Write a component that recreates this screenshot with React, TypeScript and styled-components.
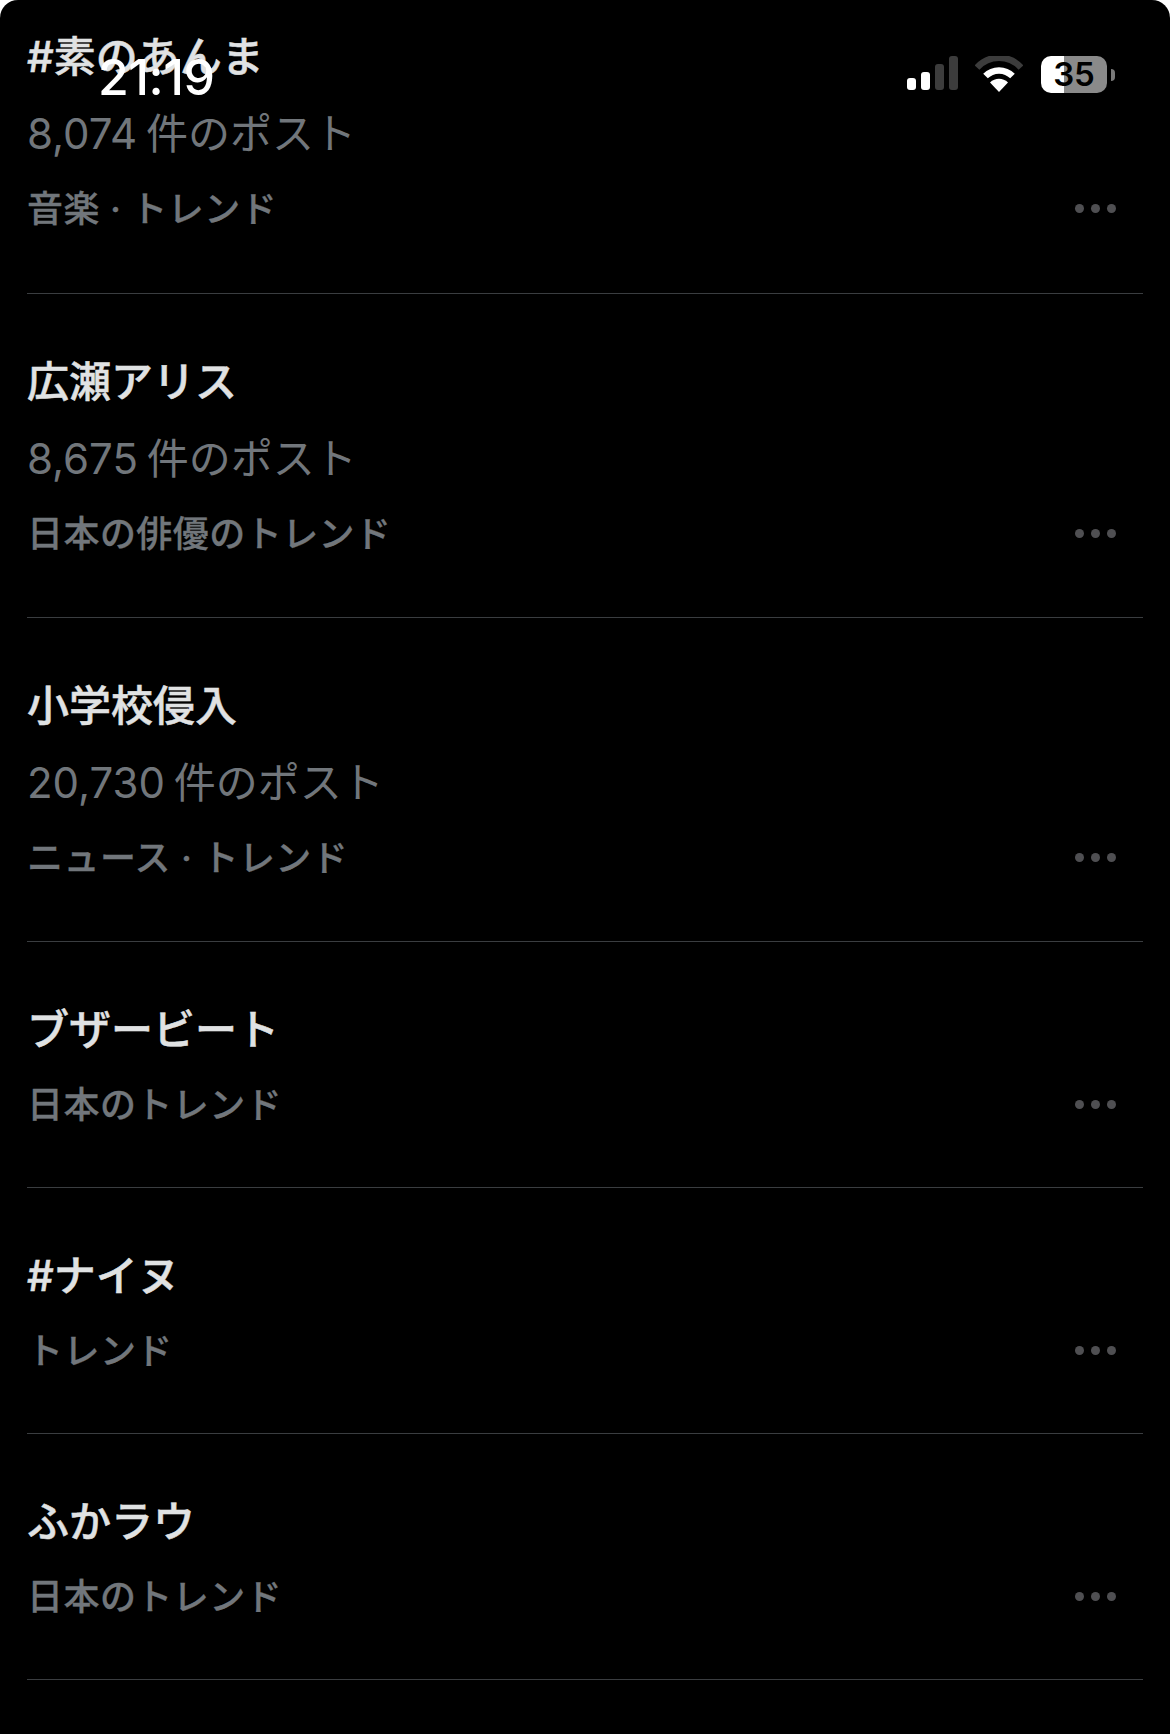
import { FC } from 'react';
import styled, { createGlobalStyle } from 'styled-components';

interface Trend {
  title: string;
  posts?: string;
  meta: string;
}

const TRENDS: Trend[] = [
  { title: '#素のあんま', posts: '8,074 件のポスト', meta: '音楽 · トレンド' },
  { title: '広瀬アリス', posts: '8,675 件のポスト', meta: '日本の俳優のトレンド' },
  { title: '小学校侵入', posts: '20,730 件のポスト', meta: 'ニュース · トレンド' },
  { title: 'ブザービート', meta: '日本のトレンド' },
  { title: '#ナイヌ', meta: 'トレンド' },
  { title: 'ふかラウ', meta: '日本のトレンド' },
];

const App: FC = () => (
  <>
    <GlobalStyle />
    <Screen>
      <StatusBar>
        <Time>21:19</Time>
        <StatusIcons>
          <svg width="51" height="34" viewBox="0 0 51 34">
            <rect x="0" y="22" width="9" height="12" rx="3" fill="#fff" />
            <rect x="14" y="16" width="9" height="18" rx="3" fill="#fff" />
            <rect x="28" y="8" width="9" height="26" rx="3" fill="#3c3c3c" />
            <rect x="42" y="0" width="9" height="34" rx="3" fill="#3c3c3c" />
          </svg>
          <svg width="48" height="36" viewBox="0 0 48 36">
            <path d="M2 11.5C14 -1.5 34 -1.5 46 11.5" fill="none" stroke="#3c3c3c" strokeWidth="6.5" />
            <path d="M10.5 20C18 12.5 30 12.5 37.5 20" fill="none" stroke="#fff" strokeWidth="6.5" />
            <path d="M24 36L15 26.5C20 21.5 28 21.5 33 26.5Z" fill="#fff" />
          </svg>
          <Battery>
            <BatteryBody>
              <BatteryLevel>35</BatteryLevel>
            </BatteryBody>
            <BatteryCap />
          </Battery>
        </StatusIcons>
      </StatusBar>
      <List>
        {TRENDS.map((trend) => (
          <Row key={trend.title}>
            <Title>{trend.title}</Title>
            {trend.posts && <Posts>{trend.posts}</Posts>}
            <MetaLine>
              <Meta>{trend.meta}</Meta>
              <More>
                <i />
                <i />
                <i />
              </More>
            </MetaLine>
          </Row>
        ))}
      </List>
    </Screen>
  </>
);

const GlobalStyle = createGlobalStyle`
  html, body {
    margin: 0;
    padding: 0;
    background: #fff;
  }
`;

const Screen = styled.div`
  position: relative;
  width: 1170px;
  height: 1734px;
  overflow: hidden;
  background: #000;
  border-radius: 18px 18px 0 0;
  font-family: 'Inter', 'Noto Sans CJK JP', sans-serif;
`;

const StatusBar = styled.div`
  position: absolute;
  top: 0;
  left: 0;
  right: 0;
  height: 100px;
  display: flex;
  justify-content: space-between;
  padding: 54px 55px 0 98px;
  box-sizing: border-box;
`;

const Time = styled.div`
  color: #fff;
  font-size: 50px;
  font-weight: 500;
  line-height: 46px;
  letter-spacing: -0.5px;
`;

const StatusIcons = styled.div`
  display: flex;
  align-items: flex-start;
  gap: 17px;
  margin-top: 2px;
  margin-left: auto;
`;

const Battery = styled.div`
  display: flex;
  align-items: center;
  margin-left: 1px;
`;

const BatteryBody = styled.div`
  width: 66px;
  height: 37px;
  border-radius: 10px;
  background: linear-gradient(to right, #fff 0, #fff 35%, #8a8a8a 35%, #8a8a8a 100%);
  display: flex;
  align-items: center;
  justify-content: center;
`;

const BatteryLevel = styled.span`
  color: #000;
  font-size: 33px;
  font-weight: 600;
  line-height: 37px;
`;

const BatteryCap = styled.div`
  width: 4px;
  height: 12px;
  margin-left: 4px;
  background: #7a7a7a;
  border-radius: 0 6px 6px 0;
`;

const List = styled.div`
  display: flex;
  flex-direction: column;
  padding: 0 27px;
`;

const Row = styled.div`
  height: 246px;
  box-sizing: border-box;
  padding-top: 62px;
  border-bottom: 1px solid #3a3d40;

  &:first-child {
    height: 294px;
    padding-top: 31px;
  }
  &:nth-child(2),
  &:nth-child(3) {
    height: 324px;
  }
`;

const Title = styled.div`
  color: #e0e2e3;
  font-size: 42px;
  font-weight: 500;
  line-height: 52px;
  -webkit-text-stroke: 0.5px #e0e2e3;
`;

const Posts = styled.div`
  color: #71767b;
  font-size: 42px;
  font-weight: 400;
  line-height: 52px;
  margin-top: 25px;
  word-spacing: -3px;
`;

const MetaLine = styled.div`
  display: flex;
  align-items: center;
  justify-content: space-between;
  margin-top: 23px;
  padding-right: 27px;
`;

const Meta = styled.div`
  color: #71767b;
  font-size: 36px;
  font-weight: 500;
  line-height: 52px;
  letter-spacing: 0.45px;
  -webkit-text-stroke: 0.3px #71767b;
`;

const More = styled.div`
  display: flex;
  gap: 7px;
  margin-top: -2px;

  i {
    display: block;
    width: 9px;
    height: 9px;
    border-radius: 50%;
    background: #4f4f52;
  }
`;

export default App;
